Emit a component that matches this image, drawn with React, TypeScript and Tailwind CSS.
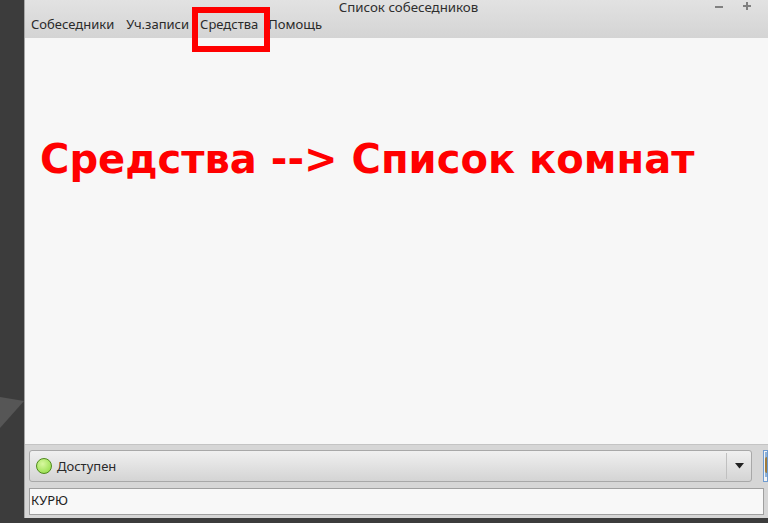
export default function App() {
  return (
    <div className="relative flex h-[523px] w-[768px] overflow-hidden bg-[#3c3c3c] font-['Liberation_Sans',sans-serif]">
      <svg className="absolute left-0 top-[390px] h-[80px] w-[24px]" viewBox="0 0 24 80">
        <polygon points="0,7 24,11 0,38" fill="#565656" />
      </svg>
      <div className="relative ml-6 flex h-[518px] w-[744px] flex-col border-l border-[#a6a6a6] bg-[#d6d6d6]">
        <div className="flex h-[38px] flex-col bg-gradient-to-b from-[#e2e2e2] to-[#d4d4d4]">
          <div className="relative flex h-[14px] items-center justify-center pl-[24px]">
            <span className="font-['Noto_Sans',sans-serif] text-[13.3px] leading-[14px] text-[#2f2f2f]">Список собеседников</span>
            <div className="absolute left-[690px] top-[6px] h-[2px] w-[8px] bg-[#808080]" />
            <div className="absolute left-[718px] top-[2px] h-[8px] w-[8px]">
              <div className="absolute left-0 top-[3px] h-[2px] w-[8px] bg-[#808080]" />
              <div className="absolute left-[3px] top-0 h-[8px] w-[2px] bg-[#808080]" />
            </div>
          </div>
          <div className="flex h-6 items-center pl-[6px] pb-[2px] font-['Noto_Sans',sans-serif] text-[13px] text-[#2a2a2a]">
            <span>Собеседники</span>
            <span className="ml-[12px]">Уч.записи</span>
            <span className="ml-[11px]">Средства</span>
            <span className="ml-[10px]">Помощь</span>
          </div>
        </div>
        <div className="flex-1 bg-[#f7f7f7]" />
        <div className="flex h-[74px] flex-col border-t border-[#c4c4c4] bg-[#d6d6d6]">
          <div className="flex items-center pl-[4px] pt-[5px]">
            <div className="flex h-[32px] w-[723px] items-center rounded-[3px] border border-[#a8a8a8] bg-gradient-to-b from-[#f0f0f0] to-[#d4d4d4] pl-[6px]">
              <span className="h-4 w-4 rounded-full border border-[#4f8a1c] bg-[radial-gradient(circle_at_40%_35%,#d8f8a0,#8ada3c)]" />
              <span className="ml-[5px] flex-1 pt-[2px] font-['Noto_Sans',sans-serif] text-[13px] text-[#2a2a2a]">Доступен</span>
              <div className="flex h-[26px] w-[25px] items-center justify-center border-l border-[#c0c0c0]">
                <svg width="9" height="6" viewBox="0 0 9 6"><polygon points="0,0 9,0 4.5,5.5" fill="#222222" /></svg>
              </div>
            </div>
            <div className="ml-[11px] h-[32px] flex-1 border border-[#6f9bd0] bg-[#f4f4f4] pb-[4px] pl-[1px] pt-[1px]">
              <div className="flex h-full w-full items-center bg-[#8fb2d8]">
                <div className="h-[16px] w-full rounded-l-[3px] bg-[#a07c3c]" />
              </div>
            </div>
          </div>
          <div className="mx-[4px] mt-[6px] flex h-[27px] items-center border border-[#a0a0a0] bg-[#f8f8f8] pb-[2px] pl-[1px] font-['Noto_Sans',sans-serif] text-[13px] text-[#222222]">КУРЮ</div>
        </div>
        <div className="absolute left-[167px] top-[7px] h-[45px] w-[78px] border-[6px] border-[#ff0000]" />
        <div className="absolute left-[15px] top-[134px] whitespace-nowrap font-['DejaVu_Sans',sans-serif] text-[40.06px] font-bold leading-[50px] text-[#ff0000]">Средства --&gt; Список комнат</div>
      </div>
    </div>
  );
}
